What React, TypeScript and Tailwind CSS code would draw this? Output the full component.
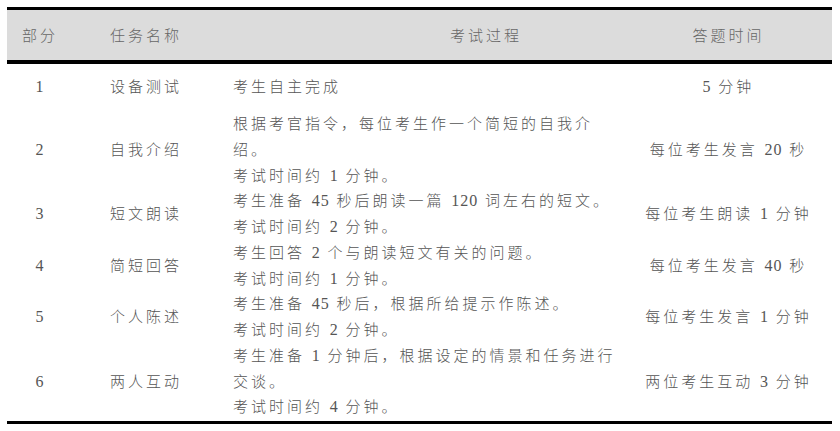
const rows = [
  { no: "1", name: "设备测试", lines: ["考生自主完成"], time: "5 分钟" },
  {
    no: "2",
    name: "自我介绍",
    lines: ["根据考官指令，每位考生作一个简短的自我介", "绍。", "考试时间约 1 分钟。"],
    time: "每位考生发言 20 秒",
  },
  {
    no: "3",
    name: "短文朗读",
    lines: ["考生准备 45 秒后朗读一篇 120 词左右的短文。", "考试时间约 2 分钟。"],
    time: "每位考生朗读 1 分钟",
  },
  {
    no: "4",
    name: "简短回答",
    lines: ["考生回答 2 个与朗读短文有关的问题。", "考试时间约 1 分钟。"],
    time: "每位考生发言 40 秒",
  },
  {
    no: "5",
    name: "个人陈述",
    lines: ["考生准备 45 秒后，根据所给提示作陈述。", "考试时间约 2 分钟。"],
    time: "每位考生发言 1 分钟",
  },
  {
    no: "6",
    name: "两人互动",
    lines: ["考生准备 1 分钟后，根据设定的情景和任务进行", "交谈。", "考试时间约 4 分钟。"],
    time: "两位考生互动 3 分钟",
  },
];

const grid = "grid grid-cols-[63px_155px_397px_210px] items-center";

// digits in the source are Times-like and set tighter than the CJK text
function Txt({ s }: { s: string }) {
  return (
    <>
      {s.split(/(\d+)/).map((part, i) =>
        /^\d+$/.test(part) ? (
          <span key={i} className="text-[16px] leading-none tracking-[1px]">
            {part}
          </span>
        ) : (
          <span key={i}>{part}</span>
        )
      )}
    </>
  );
}

export default function App() {
  return (
    <div className="w-[840px] h-[431px] bg-white pt-[7px] pl-[7px] font-['Liberation_Serif','Noto_Sans_CJK_SC',serif] text-[15px] tracking-[3px] text-[#555] font-light">
      <div className="w-[825px] border-t-[3px] border-b-[3px] border-black">
        <div className={`${grid} h-[54px] bg-[#dcdcdc] border-b-[4px] border-black pt-[3px] text-[#666]`}>
          <div className="text-center pl-[3px]">部分</div>
          <div className="pl-[40px]">任务名称</div>
          <div className="pl-[225px]">考试过程</div>
          <div className="text-center pl-[3px]">答题时间</div>
        </div>
        {rows.map((r, i) => (
          <div key={r.no} className={`${grid} leading-[25.75px] ${i === 0 ? "h-[48px]" : ""}`}>
            <div className="text-center pl-[3px]">
              <Txt s={r.no} />
            </div>
            <div className="pl-[40px]">{r.name}</div>
            <div className="pl-[8px]">
              {r.lines.map((l) => (
                <div key={l} className="whitespace-nowrap h-[25.75px]">
                  <Txt s={l} />
                </div>
              ))}
            </div>
            <div className="text-center pl-[3px]">
              <Txt s={r.time} />
            </div>
          </div>
        ))}
      </div>
    </div>
  );
}
